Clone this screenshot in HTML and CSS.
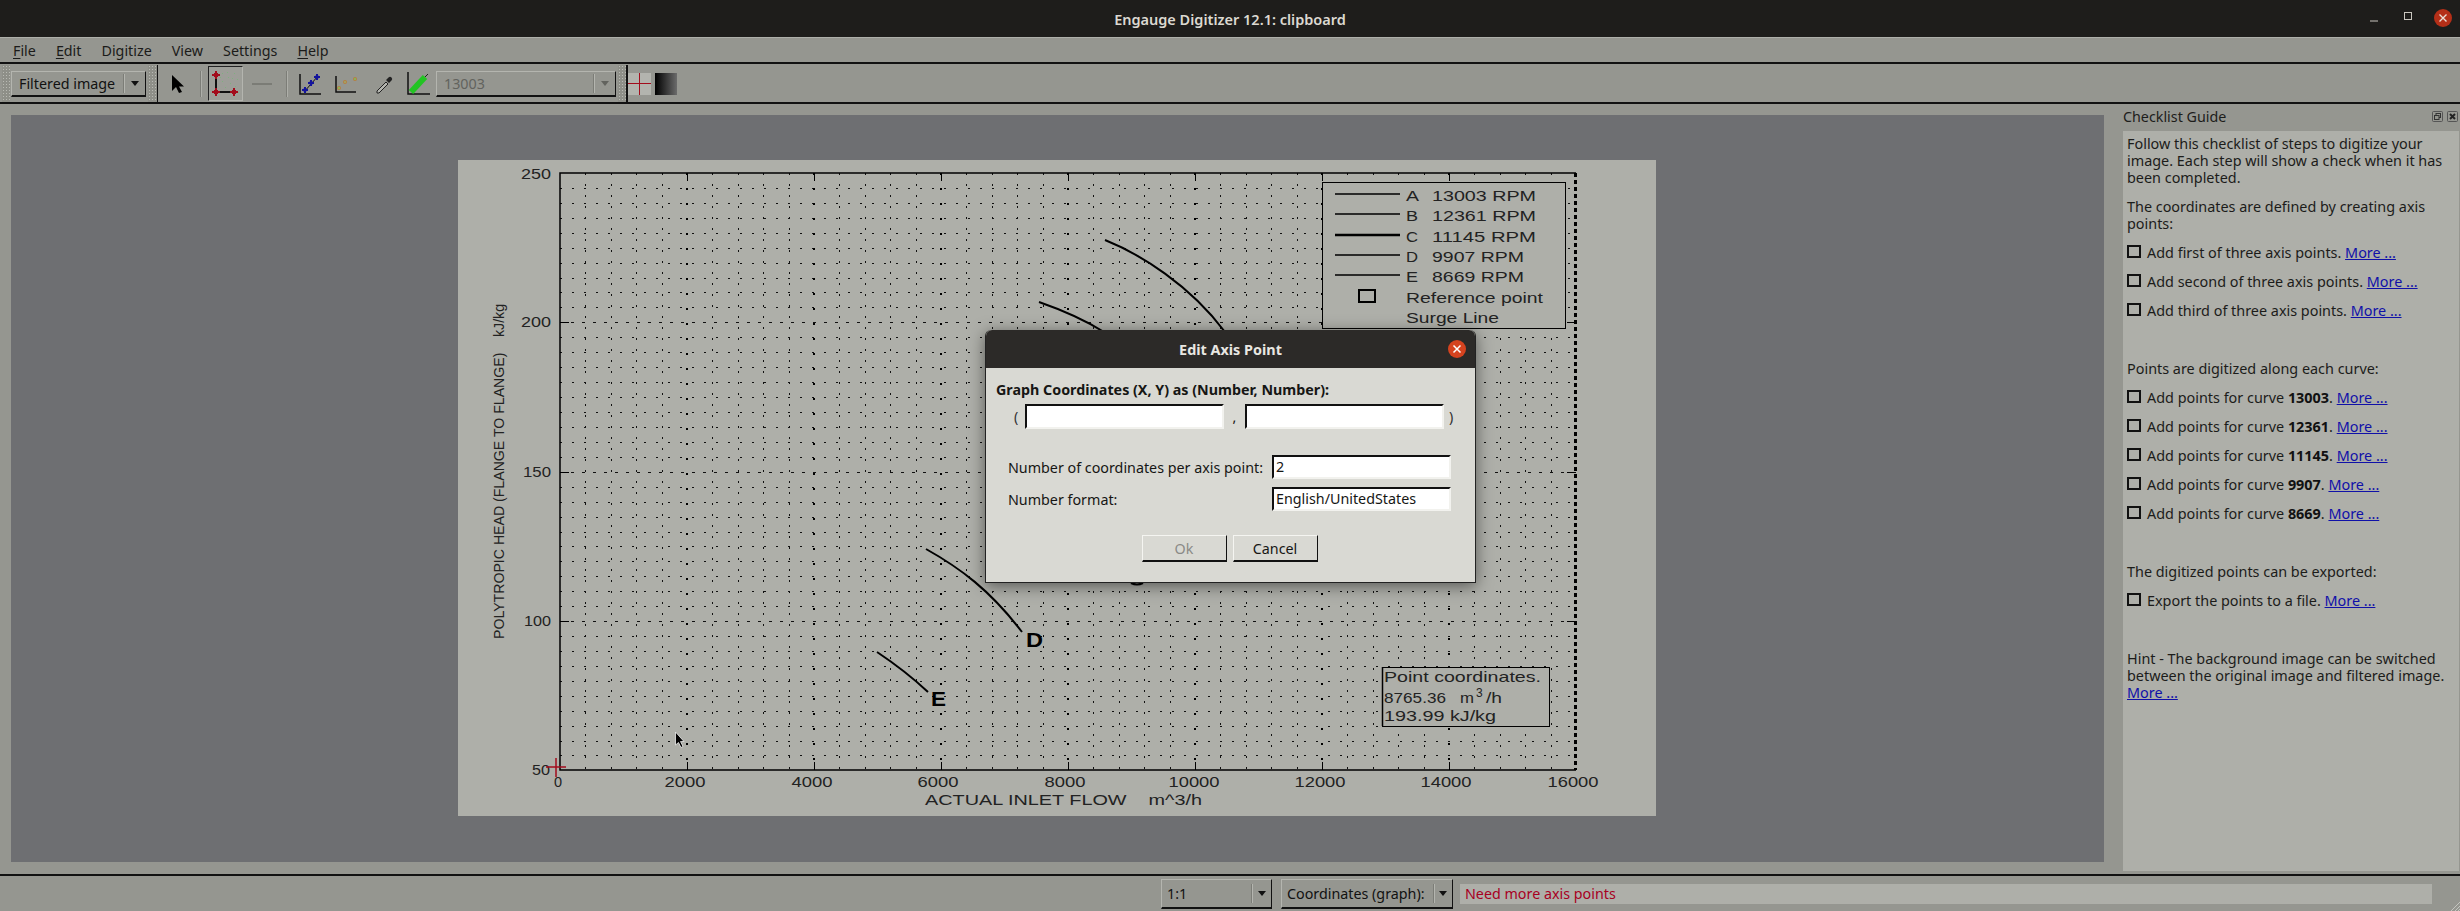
FILE: index.html
```html
<!DOCTYPE html>
<html lang="en">
<head>
<meta charset="utf-8">
<title>Engauge Digitizer 12.1: clipboard</title>
<link rel="stylesheet" href="styles.css">
</head>
<body>
<div class="app">
  <header class="titlebar">
    <span class="title">Engauge Digitizer 12.1: clipboard</span>
    <div class="winctl">
      <svg class="ctl-min" width="10" height="10" viewBox="0 0 10 10"><path d="M1 7H9" stroke="#c9c6bf" stroke-width="1"/></svg>
      <svg class="ctl-max" width="10" height="10" viewBox="0 0 10 10"><rect x="1.5" y="1.5" width="7" height="7" fill="none" stroke="#c9c6bf"/></svg>
      <svg class="ctl-close" width="20" height="20" viewBox="0 0 20 20"><circle cx="10" cy="10" r="9" fill="#b42f18"/><path d="M6.5 6.5L13.5 13.5M13.5 6.5L6.5 13.5" stroke="#eadfd6" stroke-width="1.4"/></svg>
    </div>
  </header>

  <nav class="menubar">
    <span class="mi"><u>F</u>ile</span>
    <span class="mi"><u>E</u>dit</span>
    <span class="mi">Digitize</span>
    <span class="mi">View</span>
    <span class="mi">Settings</span>
    <span class="mi"><u>H</u>elp</span>
  </nav>

  <div class="toolbar">
    <span class="handle"></span>
    <div class="combo combo-mode"><span class="combo-text">Filtered image</span><span class="combo-sep"></span><span class="arrow"></span></div>
    <span class="handle handle-b"></span>
    <svg class="tool-arrow" width="14" height="20" viewBox="0 0 14 20"><path d="M1 1V17L5 13L8 19L11 18L8 12.500H13Z" fill="#000"/></svg>
    <span class="sep sep-a"></span>
    <div class="tool-active">
      <svg width="34" height="34" viewBox="0 0 34 34">
        <g fill="#7fb07f"><rect x="14" y="7" width="1" height="1"/><rect x="20" y="11" width="1" height="1"/><rect x="26" y="7" width="1" height="1"/><rect x="14" y="15" width="1" height="1"/><rect x="22" y="17" width="1" height="1"/><rect x="29" y="13" width="1" height="1"/><rect x="17" y="21" width="1" height="1"/><rect x="27" y="20" width="1" height="1"/><rect x="12" y="11" width="1" height="1"/><rect x="30" y="26" width="1" height="1"/><rect x="24" y="12" width="1" height="1"/><rect x="19" y="6" width="1" height="1"/></g>
        <path d="M8 9V26H26" fill="none" stroke="#111" stroke-width="2"/>
        <path d="M8 5V13M4 9H12M8 22V30M4 26H12M26 22V30M22 26H30" stroke="#a30c1c" stroke-width="2"/>
        <path d="M6 7H10V11H6ZM6 24H10V28H6ZM24 24H28V28H24Z" fill="#a30c1c"/>
      </svg>
    </div>
    <span class="tool-dash"></span>
    <span class="sep sep-b"></span>
    <div class="tool-group">
      <svg width="24" height="24" viewBox="0 0 24 24"><path d="M1 2V22H22" fill="none" stroke="#111" stroke-width="1.500"/><path d="M5 20L19 4" stroke="#111"/><path d="M6 15V21M3 18H9M12 8V14M9 11H15M18 2V8M15 5H21" stroke="#14149c" stroke-width="2"/><path d="M4.500 16.500H7.500V19.500H4.500ZM10.500 9.500H13.500V12.500H10.500ZM16.500 3.500H19.500V6.500H16.500Z" fill="#14149c"/></svg>
      <svg width="24" height="24" viewBox="0 0 24 24"><path d="M1 4V20H21" fill="none" stroke="#111" stroke-width="1.500"/><circle cx="4" cy="16" r="2" fill="#b5803f"/><circle cx="10" cy="10" r="2" fill="#b5803f"/><circle cx="20" cy="7" r="2" fill="#b5803f"/><circle cx="4" cy="16" r="1" fill="#7fc05f"/><circle cx="10" cy="10" r="1" fill="#a0a86a"/><circle cx="20" cy="7" r="1" fill="#7fc05f"/></svg>
      <svg width="24" height="24" viewBox="0 0 24 24"><path d="M6 19L15 10L17 12L8 21H6Z" fill="#b4b5af" stroke="#222"/><path d="M15 8L17.500 5.500A2 2 0 0 1 20.500 8.500L18 11Z" fill="#222"/></svg>
      <svg width="24" height="24" viewBox="0 0 24 24"><path d="M1 0V22H23" fill="none" stroke="#111" stroke-width="1.500"/><path d="M4 20L18 5" stroke="#22c422" stroke-width="6"/><path d="M18 5L21 2" stroke="#222"/></svg>
    </div>
    <div class="combo combo-curve"><span class="combo-text">13003</span><span class="combo-sep"></span><span class="arrow arrow-off"></span></div>
    <span class="handle handle-c"></span>
    <svg class="swatch" width="23" height="22" viewBox="0 0 23 22"><rect width="23" height="22" fill="#b3b4ae"/><path d="M0 10.500H23M11.500 0V22" stroke="#a30c1c" stroke-width="1"/></svg>
    <span class="swatch-grad"></span>
  </div>

  <main class="main">
    <section class="canvas">
      <svg class="plot" width="1198" height="656" viewBox="458 160 1198 656">
        <rect x="458" y="160" width="1198" height="656" fill="#aeafa9"/>
        <path class="grid-h" d="M560 188H1576M560 203H1576M560 218H1576M560 233H1576M560 248H1576M560 263H1576M560 278H1576M560 292H1576M560 307H1576M560 337H1576M560 352H1576M560 367H1576M560 382H1576M560 397H1576M560 412H1576M560 427H1576M560 442H1576M560 457H1576M560 487H1576M560 502H1576M560 517H1576M560 532H1576M560 546H1576M560 561H1576M560 576H1576M560 591H1576M560 606H1576M560 636H1576M560 651H1576M560 666H1576M560 681H1576M560 696H1576M560 711H1576M560 726H1576M560 741H1576M560 755H1576"/>
        <path class="grid-v" d="M585 173V770M611 173V770M636 173V770M662 173V770M712 173V770M738 173V770M763 173V770M789 173V770M839 173V770M865 173V770M890 173V770M916 173V770M966 173V770M992 173V770M1017 173V770M1043 173V770M1093 173V770M1119 173V770M1144 173V770M1170 173V770M1220 173V770M1246 173V770M1271 173V770M1297 173V770M1347 173V770M1373 173V770M1398 173V770M1424 173V770M1474 173V770M1500 173V770M1525 173V770M1551 173V770"/>
        <path class="grid-major" d="M687 173V770M814 173V770M941 173V770M1068 173V770M1195 173V770M1322 173V770M1449 173V770"/>
        <path class="grid-h grid-strong" d="M560 322H1576M560 472H1576M560 621H1576"/>
        <path class="ticks" d="M687 173V181M814 173V181M941 173V181M1068 173V181M1195 173V181M1322 173V181M1449 173V181M687 770V762M814 770V762M941 770V762M1068 770V762M1195 770V762M1322 770V762M1449 770V762M560 322H569M560 472H569M560 621H569M1576 322H1567M1576 472H1567M1576 621H1567"/>
        <path class="axis" d="M1576 173H560V770H1576"/>
        <path class="axis-right" d="M1575 173V770"/>

        <path class="curve" d="M1105 240C1140 254 1190 285 1225 332"/>
        <path class="curve" d="M1039 302C1062 310 1085 320 1104 332"/>
        <path class="curve" d="M926 549C960 568 990 590 1022 632"/>
        <path class="curve" d="M877 652C895 664 912 677 928 692"/>
        <path class="curve" d="M1131 583Q1137 586 1143 583"/>
        <text class="letter" x="1026" y="647" textLength="17" lengthAdjust="spacingAndGlyphs">D</text>
        <text class="letter" x="931" y="706" textLength="15" lengthAdjust="spacingAndGlyphs">E</text>

        <rect class="box" x="1322.500" y="182.500" width="243" height="146"/>
        <path class="legend-line" d="M1335 194H1400M1335 214H1400M1335 255H1400M1335 275H1400"/>
        <path class="legend-line-bold" d="M1335 235H1400"/>
        <rect class="ref-mark" x="1359" y="290" width="16" height="12"/>
        <text class="t" x="1406" y="201" textLength="13" lengthAdjust="spacingAndGlyphs">A</text>
        <text class="t" x="1432" y="201" textLength="104" lengthAdjust="spacingAndGlyphs">13003 RPM</text>
        <text class="t" x="1406" y="221" textLength="12" lengthAdjust="spacingAndGlyphs">B</text>
        <text class="t" x="1432" y="221" textLength="104" lengthAdjust="spacingAndGlyphs">12361 RPM</text>
        <text class="t" x="1406" y="242" textLength="12" lengthAdjust="spacingAndGlyphs">C</text>
        <text class="t" x="1432" y="242" textLength="104" lengthAdjust="spacingAndGlyphs">11145 RPM</text>
        <text class="t" x="1406" y="262" textLength="12" lengthAdjust="spacingAndGlyphs">D</text>
        <text class="t" x="1432" y="262" textLength="92" lengthAdjust="spacingAndGlyphs">9907 RPM</text>
        <text class="t" x="1406" y="282" textLength="12" lengthAdjust="spacingAndGlyphs">E</text>
        <text class="t" x="1432" y="282" textLength="92" lengthAdjust="spacingAndGlyphs">8669 RPM</text>
        <text class="t" x="1406" y="303" textLength="137" lengthAdjust="spacingAndGlyphs">Reference point</text>
        <text class="t" x="1406" y="323" textLength="93" lengthAdjust="spacingAndGlyphs">Surge Line</text>

        <rect class="box" x="1382.500" y="667.500" width="167" height="59"/>
        <path class="axis" d="M1382.500 667V726"/>
        <text class="t" x="1384" y="682" textLength="157" lengthAdjust="spacingAndGlyphs">Point coordinates.</text>
        <text class="t" x="1384" y="703" textLength="62" lengthAdjust="spacingAndGlyphs">8765.36</text>
        <text class="t" x="1460" y="703" textLength="14" lengthAdjust="spacingAndGlyphs">m</text>
        <text class="t t-small" x="1476" y="697">3</text>
        <text class="t" x="1486" y="703" textLength="16" lengthAdjust="spacingAndGlyphs">/h</text>
        <text class="t" x="1384" y="721" textLength="112" lengthAdjust="spacingAndGlyphs">193.99 kJ/kg</text>

        <text class="t" x="521" y="179" textLength="30" lengthAdjust="spacingAndGlyphs">250</text>
        <text class="t" x="521" y="327" textLength="30" lengthAdjust="spacingAndGlyphs">200</text>
        <text class="t" x="523" y="477" textLength="28" lengthAdjust="spacingAndGlyphs">150</text>
        <text class="t" x="524" y="626" textLength="27" lengthAdjust="spacingAndGlyphs">100</text>
        <text class="t" x="532" y="775" textLength="18" lengthAdjust="spacingAndGlyphs">50</text>

        <text class="t mid" x="558" y="787">0</text>
        <text class="t mid" x="685" y="787" textLength="41" lengthAdjust="spacingAndGlyphs">2000</text>
        <text class="t mid" x="812" y="787" textLength="41" lengthAdjust="spacingAndGlyphs">4000</text>
        <text class="t mid" x="938" y="787" textLength="41" lengthAdjust="spacingAndGlyphs">6000</text>
        <text class="t mid" x="1065" y="787" textLength="41" lengthAdjust="spacingAndGlyphs">8000</text>
        <text class="t mid" x="1194" y="787" textLength="51" lengthAdjust="spacingAndGlyphs">10000</text>
        <text class="t mid" x="1320" y="787" textLength="51" lengthAdjust="spacingAndGlyphs">12000</text>
        <text class="t mid" x="1446" y="787" textLength="51" lengthAdjust="spacingAndGlyphs">14000</text>
        <text class="t mid" x="1573" y="787" textLength="51" lengthAdjust="spacingAndGlyphs">16000</text>

        <text class="t pre" x="925" y="805" textLength="277" lengthAdjust="spacingAndGlyphs">ACTUAL INLET FLOW    m^3/h</text>
        <text class="t pre" x="0" y="0" transform="translate(504 639) rotate(-90)" textLength="335" lengthAdjust="spacingAndGlyphs">POLYTROPIC HEAD (FLANGE TO FLANGE)    kJ/kg</text>

        <path class="red-cross" d="M546 767H566M556 758V777"/>
        <path class="cursor" d="M675.500 732V745L678.500 742.500L681 747.500L683 746.500L680.500 741.500H684Z"/>
      </svg>
    </section>

    <aside class="dock">
      <div class="dock-head">
        <span class="dock-title">Checklist Guide</span>
        <svg class="dock-btn" width="11" height="11" viewBox="0 0 11 11"><rect x="0.500" y="0.500" width="10" height="10" rx="1" fill="none" stroke="#555"/><rect x="4" y="2.500" width="4.500" height="4" fill="none" stroke="#333"/><rect x="2.500" y="4.500" width="4.500" height="4" fill="#92938c" stroke="#333"/></svg>
        <svg class="dock-btn" width="11" height="11" viewBox="0 0 11 11"><rect x="0.500" y="0.500" width="10" height="10" rx="1" fill="none" stroke="#555"/><path d="M3 3L8 8M8 3L3 8" stroke="#222" stroke-width="2"/></svg>
      </div>
      <div class="dock-body">
        <p>Follow this checklist of steps to digitize your image. Each step will show a check when it has been completed.</p>
        <p>The coordinates are defined by creating axis points:</p>
        <p class="chk"><span class="box-ic"></span>Add first of three axis points. <a>More ...</a></p>
        <p class="chk"><span class="box-ic"></span>Add second of three axis points. <a>More ...</a></p>
        <p class="chk gap"><span class="box-ic"></span>Add third of three axis points. <a>More ...</a></p>
        <p>Points are digitized along each curve:</p>
        <p class="chk"><span class="box-ic"></span>Add points for curve <b>13003</b>. <a>More ...</a></p>
        <p class="chk"><span class="box-ic"></span>Add points for curve <b>12361</b>. <a>More ...</a></p>
        <p class="chk"><span class="box-ic"></span>Add points for curve <b>11145</b>. <a>More ...</a></p>
        <p class="chk"><span class="box-ic"></span>Add points for curve <b>9907</b>. <a>More ...</a></p>
        <p class="chk gap"><span class="box-ic"></span>Add points for curve <b>8669</b>. <a>More ...</a></p>
        <p>The digitized points can be exported:</p>
        <p class="chk gap"><span class="box-ic"></span>Export the points to a file. <a>More ...</a></p>
        <p>Hint - The background image can be switched between the original image and filtered image. <a>More ...</a></p>
      </div>
    </aside>
  </main>

  <footer class="statusbar">
    <div class="combo combo-zoom"><span class="combo-text">1:1</span><span class="combo-sep"></span><span class="arrow"></span></div>
    <div class="combo combo-coord"><span class="combo-text">Coordinates (graph):</span><span class="combo-sep"></span><span class="arrow"></span></div>
    <div class="status-msg">Need more axis points</div>
    <svg class="grip" width="12" height="12" viewBox="0 0 12 12"><path d="M3 12L12 3M7 12L12 7M10 12L12 10" stroke="#c4c5bf"/></svg>
  </footer>
</div>

<div class="dialog">
  <div class="dlg-title">
    <span>Edit Axis Point</span>
    <svg class="dlg-close" width="18" height="18" viewBox="0 0 18 18"><circle cx="9" cy="9" r="9" fill="#d5431f"/><path d="M5.500 5.500L12.500 12.500M12.500 5.500L5.500 12.500" stroke="#fff" stroke-width="1.500"/></svg>
  </div>
  <div class="dlg-body">
    <div class="dlg-heading">Graph Coordinates (X, Y) as (Number, Number):</div>
    <div class="coord-row">
      <span class="paren">(</span><span class="field field-coord"></span><span class="comma">,</span><span class="field field-coord"></span><span class="paren">)</span>
    </div>
    <div class="form-row form-first"><span>Number of coordinates per axis point:</span><span class="field field-form">2</span></div>
    <div class="form-row"><span>Number format:</span><span class="field field-form">English/UnitedStates</span></div>
    <div class="dlg-buttons"><span class="btn btn-off">Ok</span><span class="btn">Cancel</span></div>
  </div>
</div>
</body>
</html>
```

FILE: styles.css
```css
* { box-sizing: border-box; }
html, body { margin: 0; padding: 0; height: 100%; overflow: hidden; }
body { font-family: "Noto Sans", "DejaVu Sans", sans-serif; font-size: 14.300px; color: #111; background: #959690; }
.app { width: 2460px; height: 911px; display: flex; flex-direction: column; }

.titlebar { height: 37px; background: #1e1d1b; display: flex; align-items: center; justify-content: center; position: relative; flex: none; }
.title { color: #dcd9d1; font-weight: 600; font-size: 14.500px; }
.winctl { position: absolute; right: 7px; top: 8px; display: flex; align-items: center; }
.ctl-min { margin-right: 24px; margin-top: 2px; }
.ctl-max { margin-right: 20px; margin-top: -4px; }

.menubar { height: 27px; flex: none; background: #959690; border-top: 1px solid #aeafa9; border-bottom: 2px solid #111; display: flex; align-items: center; padding-left: 13px; gap: 20px; color: #1b1b19; }
.mi u { text-underline-offset: 2px; }

.toolbar { height: 40px; flex: none; background: #959690; border-bottom: 2px solid #111; display: flex; align-items: center; padding-left: 2px; padding-top: 1px; }
.handle { width: 8px; height: 37px; flex: none; background-color: #8e8f88; background-image: radial-gradient(#b9bab4 0.7px, transparent 0.8px); background-size: 3px 3px; }
.handle-b { width: 10px; margin-left: 2px; border-right: 1px solid #111; }
.handle-c { width: 10px; margin-left: 2px; border-right: 2px solid #111; }

.combo { display: flex; align-items: center; height: 26px; flex: none; border-top: 1px solid #b4b5af; border-left: 1px solid #b4b5af; border-right: 1px solid #111; border-bottom: 2px solid #111; background: #959690; }
.combo-text { flex: 1; padding-left: 7px; white-space: nowrap; }
.combo-sep { width: 2px; height: 19px; background: #7c7d77; border-right: 1px solid #b4b5af; }
.arrow { width: 0; height: 0; margin: 0 6px 0 6px; border-left: 4px solid transparent; border-right: 4px solid transparent; border-top: 5px solid #111; }
.arrow-off { border-top-color: #62635e; }
.combo-mode { width: 135px; margin-left: 1px; }
.combo-curve { width: 180px; margin-left: 5px; color: #62635e; }
.combo-curve .combo-text { padding-left: 7px; }

.tool-arrow { margin-left: 13px; flex: none; }
.sep { width: 2px; height: 26px; background: #7c7d77; border-right: 1px solid #aeafa9; flex: none; }
.sep-a { margin-left: 15px; }
.tool-active { width: 35px; height: 35px; margin-left: 6px; border: 1px solid; border-color: #222 #b4b5af #b4b5af #222; background: #9d9e98; flex: none; }
.tool-active svg { display: block; margin: -1px 0 0 -1px; }
.tool-dash { width: 20px; height: 2px; margin-left: 9px; background: #7b7c76; flex: none; }
.sep-b { margin-left: 14px; }
.tool-group { display: flex; gap: 12px; margin-left: 11px; flex: none; }
.swatch { margin-left: 0; flex: none; }
.swatch-grad { width: 22px; height: 22px; margin-left: 4px; background: linear-gradient(90deg, #000, #6b6b6b); flex: none; }

.main { flex: 1; min-height: 0; display: flex; background: #959690; padding: 11px 1px 0 11px; }
.canvas { width: 2093px; height: 747px; padding: 0 1px 1px 0; background: #6e6f72; display: flex; align-items: center; justify-content: center; flex: none; }
.plot { display: block; flex: none; }
.grid-h { stroke: #111; stroke-width: 1; stroke-dasharray: 2 10; fill: none; shape-rendering: crispEdges; }
.grid-strong { stroke-dasharray: 3 8; }
.grid-v { stroke: #111; stroke-width: 1; stroke-dasharray: 2 9; fill: none; shape-rendering: crispEdges; }
.grid-major { stroke: #000; stroke-width: 2; stroke-dasharray: 2 13; fill: none; shape-rendering: crispEdges; }
.ticks { stroke: #000; stroke-width: 1; fill: none; shape-rendering: crispEdges; }
.axis { stroke: #000; stroke-width: 1.500; fill: none; }
.axis-right { stroke: #000; stroke-width: 3; stroke-dasharray: 4 3; fill: none; shape-rendering: crispEdges; }
.curve { stroke: #000; stroke-width: 2; fill: none; }
.letter { font-family: "Liberation Sans", sans-serif; font-size: 21px; font-weight: 700; fill: #000; }
.box { fill: #aeafa9; stroke: #000; stroke-width: 1; }
.legend-line { stroke: #000; stroke-width: 1.500; }
.legend-line-bold { stroke: #000; stroke-width: 2.500; }
.ref-mark { fill: none; stroke: #000; stroke-width: 2; }
.t { font-family: "Liberation Sans", sans-serif; font-size: 14.500px; fill: #222; }
.t-small { font-size: 12px; }
.mid { text-anchor: middle; }
.pre { white-space: pre; }
.red-cross { stroke: #a30c1c; stroke-width: 1.500; fill: none; }
.cursor { fill: #000; stroke: #eee; stroke-width: 0.800; }

.dock { width: 336px; margin-left: 19px; margin-top: -11px; height: 767px; display: flex; flex-direction: column; flex: none; }
.dock-head { height: 27px; display: flex; align-items: center; gap: 4px; padding-right: 1px; padding-bottom: 2px; flex: none; }
.dock-title { flex: 1; color: #1d1d1b; }
.dock-btn { flex: none; }
.dock-body { flex: 1; background: #aeafa9; padding: 4px 10px 0 4px; font-size: 14.400px; line-height: 17px; color: #1c1c1a; }
.dock-body p { margin: 0 0 12px 0; }
.dock-body p.gap { margin-bottom: 41px; }
.dock-body b { color: #111; font-weight: 700; }
.dock-body a { color: #1010a8; text-decoration: underline; white-space: nowrap; }
.chk { display: flex; align-items: baseline; white-space: pre; }
.box-ic { width: 14px; height: 13px; border: 2px solid #111; margin-right: 6px; flex: none; align-self: center; margin-top: -2px; }

.statusbar { height: 37px; flex: none; background: #959690; border-top: 2px solid #111; display: flex; align-items: center; justify-content: flex-end; position: relative; }
.combo-zoom { width: 111px; height: 30px; }
.combo-coord { width: 172px; height: 30px; margin-left: 9px; }
.combo-zoom .combo-text, .combo-coord .combo-text { padding-left: 5px; }
.combo-coord .combo-sep { margin-right: -1px; }
.combo-zoom .arrow, .combo-coord .arrow { margin: 0 5px 0 5px; }
.status-msg { width: 972px; height: 20px; margin-left: 7px; margin-right: 28px; background: #aeafa9; color: #a8001f; line-height: 20px; padding-left: 5px; }
.grip { position: absolute; right: 0; bottom: 0; }

.dialog { position: absolute; left: 985px; top: 330px; width: 491px; height: 253px; background: #d9d9d3; border-radius: 6px 6px 0 0; box-shadow: 0 3px 16px rgba(0,0,0,.5); border: 1px solid #222; border-top: none; display: flex; flex-direction: column; color: #161614; }
.dlg-title { height: 38px; background: #2c2a28; border-radius: 6px 6px 0 0; color: #e9e7e2; font-weight: 700; font-size: 14.400px; display: flex; align-items: center; justify-content: center; position: relative; flex: none; }
.dlg-close { position: absolute; right: 9px; top: 10px; }
.dlg-body { padding: 13px 24px 0 10px; flex: 1; display: flex; flex-direction: column; }
.dlg-heading { font-weight: 700; line-height: 18px; white-space: nowrap; }
.coord-row { display: flex; align-items: center; height: 25px; margin-top: 5px; }
.paren { width: 8px; flex: none; color: #333; }
.coord-row .paren:first-child { margin-left: 18px; margin-right: 3px; }
.coord-row .paren:last-child { margin-left: 5px; }
.comma { width: 21px; text-align: center; flex: none; }
.field { background: #fff; border: 2px solid; border-color: #111 #f2f2ee #f2f2ee #111; display: block; flex: none; padding-left: 2px; }
.field-coord { width: 199px; height: 25px; }
.form-row { display: flex; align-items: center; justify-content: space-between; padding-left: 12px; margin-bottom: 8px; height: 24px; }
.form-first { margin-top: 26px; }
.field-form { width: 179px; height: 24px; line-height: 20px; }
.dlg-buttons { display: flex; justify-content: center; gap: 6px; margin-top: 16px; padding-left: 12px; }
.btn { width: 85px; height: 27px; display: flex; align-items: center; justify-content: center; border: 1px solid; border-color: #f5f5f1 #111 #111 #f5f5f1; border-bottom-width: 2px; background: #d9d9d3; }
.btn-off { color: #8a8a86; }
```
